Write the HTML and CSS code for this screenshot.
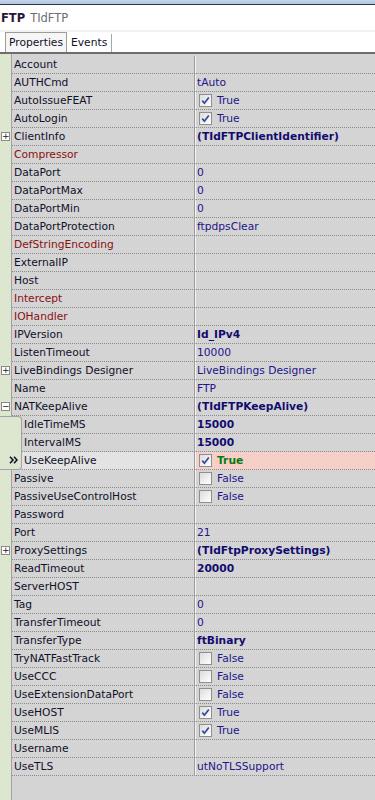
FILE: index.html
```html
<!DOCTYPE html>
<html lang="en">
<head>
  <meta charset="UTF-8">
  <meta name="viewport" content="width=device-width, initial-scale=1.0">
  <title>Object Inspector - FTP</title>
  <link rel="stylesheet" href="styles.css">
</head>
<body>
  <div class="inspector">
    <div class="title-edge"></div>
    <header class="inspector-header">
      <span class="comp-name">FTP</span><span class="comp-class">TIdFTP</span>
    </header>
    <div class="tabs">
      <div class="tab active">Properties</div>
      <div class="tab">Events</div>
    </div>
    <div class="grid">
      <div class="row"><div class="gutter"></div><div class="name">Account</div><div class="value"></div></div>
      <div class="row"><div class="gutter"></div><div class="name">AUTHCmd</div><div class="value">tAuto</div></div>
      <div class="row"><div class="gutter"></div><div class="name">AutoIssueFEAT</div><div class="value"><span class="check on"><svg viewBox="0 0 11 11" width="11" height="11"><path d="M2.3 5.6 L4.4 8.2 L8.8 2.4"/></svg></span>True</div></div>
      <div class="row"><div class="gutter"></div><div class="name">AutoLogin</div><div class="value"><span class="check on"><svg viewBox="0 0 11 11" width="11" height="11"><path d="M2.3 5.6 L4.4 8.2 L8.8 2.4"/></svg></span>True</div></div>
      <div class="row"><div class="gutter"><span class="expander">+</span></div><div class="name">ClientInfo</div><div class="value bold">(TIdFTPClientIdentifier)</div></div>
      <div class="row"><div class="gutter"></div><div class="name ref">Compressor</div><div class="value"></div></div>
      <div class="row"><div class="gutter"></div><div class="name">DataPort</div><div class="value">0</div></div>
      <div class="row"><div class="gutter"></div><div class="name">DataPortMax</div><div class="value">0</div></div>
      <div class="row"><div class="gutter"></div><div class="name">DataPortMin</div><div class="value">0</div></div>
      <div class="row"><div class="gutter"></div><div class="name">DataPortProtection</div><div class="value">ftpdpsClear</div></div>
      <div class="row"><div class="gutter"></div><div class="name ref">DefStringEncoding</div><div class="value"></div></div>
      <div class="row"><div class="gutter"></div><div class="name">ExternalIP</div><div class="value"></div></div>
      <div class="row"><div class="gutter"></div><div class="name">Host</div><div class="value"></div></div>
      <div class="row"><div class="gutter"></div><div class="name ref">Intercept</div><div class="value"></div></div>
      <div class="row"><div class="gutter"></div><div class="name ref">IOHandler</div><div class="value"></div></div>
      <div class="row"><div class="gutter"></div><div class="name">IPVersion</div><div class="value bold">Id_IPv4</div></div>
      <div class="row"><div class="gutter"></div><div class="name">ListenTimeout</div><div class="value">10000</div></div>
      <div class="row"><div class="gutter"><span class="expander">+</span></div><div class="name">LiveBindings Designer</div><div class="value">LiveBindings Designer</div></div>
      <div class="row"><div class="gutter"></div><div class="name">Name</div><div class="value">FTP</div></div>
      <div class="row"><div class="gutter"><span class="expander">&minus;</span></div><div class="name">NATKeepAlive</div><div class="value bold">(TIdFTPKeepAlive)</div></div>
      <div class="row sub first"><div class="gutter"></div><div class="name">IdleTimeMS</div><div class="value bold">15000</div></div>
      <div class="row sub"><div class="gutter"></div><div class="name">IntervalMS</div><div class="value bold">15000</div></div>
      <div class="row sub last selected"><div class="gutter"><svg class="marker" viewBox="0 0 9 8" width="9" height="8"><path d="M1 0.8 L4 4 L1 7.2 M5 0.8 L8 4 L5 7.2"/></svg></div><div class="name">UseKeepAlive</div><div class="value bold"><span class="check on"><svg viewBox="0 0 11 11" width="11" height="11"><path d="M2.3 5.6 L4.4 8.2 L8.8 2.4"/></svg></span>True</div></div>
      <div class="row"><div class="gutter"></div><div class="name">Passive</div><div class="value"><span class="check"></span>False</div></div>
      <div class="row"><div class="gutter"></div><div class="name">PassiveUseControlHost</div><div class="value"><span class="check"></span>False</div></div>
      <div class="row"><div class="gutter"></div><div class="name">Password</div><div class="value"></div></div>
      <div class="row"><div class="gutter"></div><div class="name">Port</div><div class="value">21</div></div>
      <div class="row"><div class="gutter"><span class="expander">+</span></div><div class="name">ProxySettings</div><div class="value bold">(TIdFtpProxySettings)</div></div>
      <div class="row"><div class="gutter"></div><div class="name">ReadTimeout</div><div class="value bold">20000</div></div>
      <div class="row"><div class="gutter"></div><div class="name">ServerHOST</div><div class="value"></div></div>
      <div class="row"><div class="gutter"></div><div class="name">Tag</div><div class="value">0</div></div>
      <div class="row"><div class="gutter"></div><div class="name">TransferTimeout</div><div class="value">0</div></div>
      <div class="row"><div class="gutter"></div><div class="name">TransferType</div><div class="value bold">ftBinary</div></div>
      <div class="row"><div class="gutter"></div><div class="name">TryNATFastTrack</div><div class="value"><span class="check"></span>False</div></div>
      <div class="row"><div class="gutter"></div><div class="name">UseCCC</div><div class="value"><span class="check"></span>False</div></div>
      <div class="row"><div class="gutter"></div><div class="name">UseExtensionDataPort</div><div class="value"><span class="check"></span>False</div></div>
      <div class="row"><div class="gutter"></div><div class="name">UseHOST</div><div class="value"><span class="check on"><svg viewBox="0 0 11 11" width="11" height="11"><path d="M2.3 5.6 L4.4 8.2 L8.8 2.4"/></svg></span>True</div></div>
      <div class="row"><div class="gutter"></div><div class="name">UseMLIS</div><div class="value"><span class="check on"><svg viewBox="0 0 11 11" width="11" height="11"><path d="M2.3 5.6 L4.4 8.2 L8.8 2.4"/></svg></span>True</div></div>
      <div class="row"><div class="gutter"></div><div class="name">Username</div><div class="value"></div></div>
      <div class="row"><div class="gutter"></div><div class="name">UseTLS</div><div class="value">utNoTLSSupport</div></div>
    </div>
  </div>
</body>
</html>
```

FILE: styles.css
```css
* {
  margin: 0;
  padding: 0;
  box-sizing: border-box;
  font-family: 'DejaVu Sans', 'Liberation Sans', sans-serif;
}
body {
  background: #ffffff;
  color: #101028;
  font-size: 10.7px;
}
.inspector {
  display: flex;
  flex-direction: column;
  height: 100vh;
  overflow: hidden;
}
.title-edge {
  height: 5px;
  flex: none;
  background: linear-gradient(#c3d5ec, #b2c7e2);
  border-bottom: 1px solid #2e3440;
}
.inspector-header {
  height: 27px;
  flex: none;
  display: flex;
  align-items: center;
  padding-left: 1px;
  border-bottom: 2px solid #f0f0f0;
  font-size: 11.5px;
}
.comp-name {
  font-weight: bold;
  color: #2a1438;
}
.comp-class {
  margin-left: 5px;
  color: #6e6e6e;
}
.tabs {
  height: 22px;
  flex: none;
  display: flex;
  align-items: flex-end;
  padding-left: 5px;
  border-bottom: 2px solid #6d6d6d;
}
.tab {
  height: 18px;
  line-height: 18px;
  padding: 0 4px;
  border-right: 1px solid #a8a8a8;
}
.tab.active {
  height: 20px;
  line-height: 19px;
  padding: 0 3px;
  border: 1px solid #9c9c9c;
  border-bottom: none;
  background: #f6f6f6;
}
.grid {
  flex: 1;
  padding-top: 2px;
  background: linear-gradient(to right, #dde7cf 11px, #a2a2a2 11px, #a2a2a2 12px, #d4d4d4 12px);
}
.row {
  display: flex;
  height: 18px;
  line-height: 17px;
  white-space: nowrap;
}
.gutter {
  width: 12px;
  flex: none;
  position: relative;
}
.name {
  width: 183px;
  flex: none;
  padding-left: 2px;
  border-right: 1px solid #9c9c9c;
  border-bottom: 1px dotted #8a8a8a;
  overflow: hidden;
}
.name.ref {
  color: #8a1010;
}
.value {
  flex: 1;
  display: flex;
  align-items: center;
  padding-left: 1px;
  border-left: 1px solid #f4f4f4;
  border-bottom: 1px dotted #8a8a8a;
  color: #22148a;
  overflow: hidden;
}
.value.bold {
  font-weight: bold;
  color: #120c6e;
}
.row.sub .gutter {
  width: 22px;
  background: #dde7cf;
  border-right: 1px solid #a2a2a2;
}
.row.sub .name {
  width: 173px;
}
.row.sub.first .gutter {
  border-top: 1px solid #a2a2a2;
  border-top-right-radius: 4px;
}
.row.sub.last .gutter {
  border-bottom: 1px solid #a2a2a2;
  border-bottom-right-radius: 4px;
}
.row.selected .name {
  background: #e3e3e3;
}
.row.selected .value {
  background: #f6cfc9;
  color: #0a7a10;
}
.expander {
  position: absolute;
  left: 1px;
  top: 4px;
  width: 9px;
  height: 9px;
  border: 1px solid #8a8a8a;
  background: #ffffff;
  font-size: 9px;
  line-height: 7px;
  text-align: center;
  color: #202020;
}
.marker {
  position: absolute;
  left: 9px;
  top: 4px;
  fill: none;
  stroke: #101028;
  stroke-width: 1.6;
}
.check {
  width: 13px;
  height: 13px;
  flex: none;
  margin: 0 5px 0 2px;
  border: 1px solid #8e8f8f;
  background: linear-gradient(135deg, #dcdcdc, #ffffff);
  display: flex;
  align-items: center;
  justify-content: center;
}
.check svg {
  fill: none;
  stroke: #33489a;
  stroke-width: 1.7;
}
```
